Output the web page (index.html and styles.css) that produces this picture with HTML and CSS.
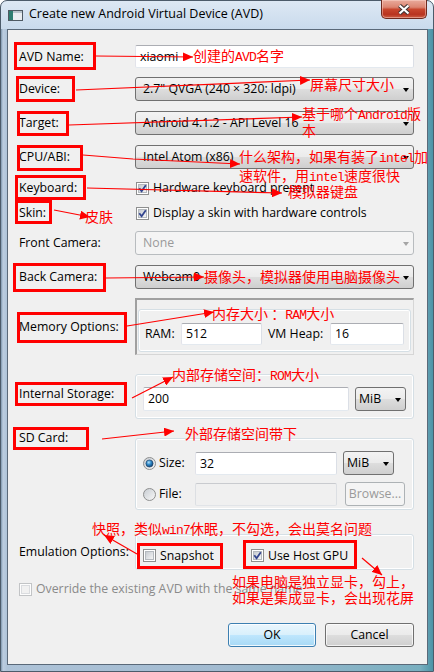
FILE: index.html
```html
<!DOCTYPE html>
<html lang="en">
<head>
<meta charset="utf-8">
<title>Create new Android Virtual Device (AVD)</title>
<link rel="stylesheet" href="styles.css">
</head>
<body>
<div class="window">
  <header class="titlebar">
    <svg class="app-icon" width="15" height="11" viewBox="0 0 15 11">
      <rect x="0.5" y="0.5" width="14" height="10" fill="#e9edf0" stroke="#4f5a63"/>
      <rect x="1" y="1" width="4" height="9" fill="#2f7d70"/>
      <rect x="5" y="1" width="9" height="2" fill="#b7c2ca"/>
    </svg>
    <span class="title">Create new Android Virtual Device (AVD)</span>
    <div class="close-btn">
      <svg width="14" height="11" viewBox="0 0 14 11">
        <path d="M2.5 1.5 L11.5 9.5 M11.5 1.5 L2.5 9.5" stroke="#3e3434" stroke-width="4.2" fill="none"/>
        <path d="M2.5 1.5 L11.5 9.5 M11.5 1.5 L2.5 9.5" stroke="#ffffff" stroke-width="2.2" fill="none"/>
      </svg>
    </div>
  </header>

  <main class="client">
    <div class="row">
      <span class="lbl">AVD Name:</span>
      <div class="input">xiaomi</div>
    </div>
    <div class="row mt-9">
      <span class="lbl">Device:</span>
      <div class="select"><span>2.7" QVGA (240 × 320: ldpi)</span></div>
    </div>
    <div class="row mt-10">
      <span class="lbl">Target:</span>
      <div class="select"><span>Android 4.1.2 - API Level 16</span></div>
    </div>
    <div class="row mt-10">
      <span class="lbl">CPU/ABI:</span>
      <div class="select"><span>Intel Atom (x86)</span></div>
    </div>
    <div class="row row-check mt-7">
      <span class="lbl">Keyboard:</span>
      <label class="check">
        <svg class="cb" width="13" height="13" viewBox="0 0 13 13">
          <defs><linearGradient id="g1" x1="0" y1="0" x2="1" y2="1"><stop offset="0" stop-color="#c3c8ce"/><stop offset="1" stop-color="#f8f8f8"/></linearGradient></defs>
          <rect x="0.5" y="0.5" width="12" height="12" fill="#fff" stroke="#8e8f8f"/>
          <rect x="2.5" y="2.5" width="8" height="8" fill="url(#g1)" stroke="#b4b9be"/>
          <path d="M3.3 6.3 L5.6 9.3 L9.8 3.2" fill="none" stroke="#33458f" stroke-width="1.8"/>
        </svg>
        <span>Hardware keyboard present</span>
      </label>
    </div>
    <div class="row row-check mt-1">
      <span class="lbl">Skin:</span>
      <label class="check">
        <svg class="cb" width="13" height="13" viewBox="0 0 13 13">
          <rect x="0.5" y="0.5" width="12" height="12" fill="#fff" stroke="#8e8f8f"/>
          <rect x="2.5" y="2.5" width="8" height="8" fill="url(#g1)" stroke="#b4b9be"/>
          <path d="M3.3 6.3 L5.6 9.3 L9.8 3.2" fill="none" stroke="#33458f" stroke-width="1.8"/>
        </svg>
        <span>Display a skin with hardware controls</span>
      </label>
    </div>
    <div class="row mt-6">
      <span class="lbl">Front Camera:</span>
      <div class="select is-disabled"><span>None</span></div>
    </div>
    <div class="row mt-10">
      <span class="lbl">Back Camera:</span>
      <div class="select"><span>Webcam0</span></div>
    </div>
    <div class="row mt-9">
      <span class="lbl">Memory Options:</span>
      <div class="mem-frame">
        <div class="group mem-group">
          <span class="mem-lbl">RAM:</span>
          <div class="input mem-ram">512</div>
          <span class="mem-lbl mem-lbl-vm">VM Heap:</span>
          <div class="input mem-vm">16</div>
        </div>
      </div>
    </div>
    <div class="row mt-19">
      <span class="lbl lbl-raise">Internal Storage:</span>
      <div class="group storage-group">
        <div class="input grow">200</div>
        <div class="select select-small"><span>MiB</span></div>
      </div>
    </div>
    <div class="row row-top mt-19">
      <span class="lbl lbl-sd">SD Card:</span>
      <div class="group sd-group">
        <div class="sd-line">
          <label class="radio-opt">
            <svg width="13" height="13" viewBox="0 0 13 13">
              <defs>
                <linearGradient id="rg" x1="0" y1="0" x2="1" y2="1"><stop offset="0" stop-color="#c6cbd1"/><stop offset="1" stop-color="#f9f9f9"/></linearGradient>
                <radialGradient id="rd" cx="0.4" cy="0.35" r="0.7"><stop offset="0" stop-color="#b6e2fb"/><stop offset="0.45" stop-color="#2e89c9"/><stop offset="1" stop-color="#0f3c6c"/></radialGradient>
              </defs>
              <circle cx="6.5" cy="6.5" r="6" fill="url(#rg)" stroke="#8e8f8f"/>
              <circle cx="6.5" cy="6.5" r="3.6" fill="url(#rd)" stroke="#1c3d5e" stroke-width="0.6"/>
            </svg>
            <span>Size:</span>
          </label>
          <div class="input sd-input">32</div>
          <div class="select select-small sd-unit"><span>MiB</span></div>
        </div>
        <div class="sd-line">
          <label class="radio-opt">
            <svg width="13" height="13" viewBox="0 0 13 13">
              <circle cx="6.5" cy="6.5" r="6" fill="url(#rg)" stroke="#8e8f8f"/>
            </svg>
            <span>File:</span>
          </label>
          <div class="input sd-input is-disabled"></div>
          <div class="button is-disabled browse">Browse...</div>
        </div>
      </div>
    </div>
    <div class="row mt-24">
      <span class="lbl">Emulation Options:</span>
      <div class="group emu-group">
        <label class="check emu-snap">
          <svg class="cb" width="13" height="13" viewBox="0 0 13 13">
            <rect x="0.5" y="0.5" width="12" height="12" fill="#fff" stroke="#8e8f8f"/>
            <rect x="2.5" y="2.5" width="8" height="8" fill="url(#g1)" stroke="#b4b9be"/>
          </svg>
          <span>Snapshot</span>
        </label>
        <label class="check">
          <svg class="cb" width="13" height="13" viewBox="0 0 13 13">
            <rect x="0.5" y="0.5" width="12" height="12" fill="#fff" stroke="#8e8f8f"/>
            <rect x="2.5" y="2.5" width="8" height="8" fill="url(#g1)" stroke="#b4b9be"/>
            <path d="M3.3 6.3 L5.6 9.3 L9.8 3.2" fill="none" stroke="#33458f" stroke-width="1.8"/>
          </svg>
          <span>Use Host GPU</span>
        </label>
      </div>
    </div>
    <label class="check override mt-10">
      <svg class="cb" width="13" height="13" viewBox="0 0 13 13">
        <rect x="0.5" y="0.5" width="12" height="12" fill="#fdfdfd" stroke="#c2c4c6"/>
        <rect x="2.5" y="2.5" width="8" height="8" fill="#f1f1f1" stroke="#dadcdf"/>
      </svg>
      <span>Override the existing AVD with the same name</span>
    </label>
    <div class="buttons">
      <div class="button button-default">OK</div>
      <div class="button">Cancel</div>
    </div>
  </main>
</div>

<svg class="marks" width="434" height="672" viewBox="0 0 434 672">
  <defs>
    <marker id="ah" markerUnits="userSpaceOnUse" markerWidth="11" markerHeight="9" refX="10" refY="4.5" orient="auto">
      <path d="M0 0 L10 4.5 L0 9 Z" fill="#ff0000"/>
    </marker>
  </defs>
  <g fill="none" stroke="#ff0000" stroke-width="3">
    <rect x="15.5" y="43.5" width="79" height="25"/>
    <rect x="17.5" y="77.5" width="56" height="23"/>
    <rect x="18.5" y="112.5" width="49" height="22"/>
    <rect x="18.5" y="146.5" width="63" height="23"/>
    <rect x="16.5" y="176.5" width="68" height="22"/>
    <rect x="16.5" y="201.5" width="34" height="21"/>
    <rect x="14.5" y="264.5" width="90" height="26"/>
    <rect x="18.5" y="313.5" width="107" height="28"/>
    <rect x="16.5" y="383.5" width="109" height="21"/>
    <rect x="14.5" y="428.5" width="73" height="20"/>
    <rect x="138.5" y="544.5" width="83" height="23"/>
    <rect x="244.5" y="541.5" width="111" height="26"/>
  </g>
  <g fill="none" stroke="#ff0000" stroke-width="1.2" marker-end="url(#ah)">
    <path d="M96 56 L193 57"/>
    <path d="M76 90 L310 80"/>
    <path d="M69 125 L302 117"/>
    <path d="M83 155 L133 159 L240 164"/>
    <path d="M87 188 L282 193"/>
    <path d="M54 210 L90 217"/>
    <path d="M106 278 L204 277"/>
    <path d="M127 326 L214 312"/>
    <path d="M132 398 L173 377"/>
    <path d="M102 439 L174 431"/>
    <path d="M137 554 L104 535"/>
    <path d="M362 558 L382 575"/>
  </g>
</svg>

<div class="notes">
  <p class="note n-name">创建的<span class="en">AVD</span>名字</p>
  <p class="note n-device">屏幕尺寸大小</p>
  <p class="note n-target">基于哪个<span class="en">Android</span>版<br>本</p>
  <p class="note n-cpu">什么架构，如果有装了<span class="en">intel</span>加<br>速软件，用<span class="en">intel</span>速度很快</p>
  <p class="note n-kbd">模拟器键盘</p>
  <p class="note n-skin">皮肤</p>
  <p class="note n-cam">摄像头，模拟器使用电脑摄像头</p>
  <p class="note n-mem">内存大小 ：<span class="en">RAM</span>大小</p>
  <p class="note n-rom">内部存储空间：<span class="en">ROM</span>大小</p>
  <p class="note n-sd">外部存储空间带下</p>
  <p class="note n-snap">快照，类似<span class="en">win7</span>休眠，不勾选，会出莫名问题</p>
  <p class="note n-gpu">如果电脑是独立显卡，勾上，<br>如果是集成显卡，会出现花屏</p>
</div>
</body>
</html>
```

FILE: styles.css
```css
* { box-sizing: border-box; }

html, body { margin: 0; padding: 0; }

body {
  width: 434px;
  height: 672px;
  overflow: hidden;
  position: relative;
  background: #ffffff;
  font-family: "Open Sans", "Noto Sans", sans-serif;
  font-size: 12.3px;
  line-height: 16px;
  color: #000;
}

/* ---------- window chrome ---------- */
.window {
  width: 434px;
  height: 672px;
  display: flex;
  flex-direction: column;
  padding: 0 5px 6px 6px;
  border: 1px solid #4c5b6a;
  border-radius: 7px 7px 0 0;
  background:
    linear-gradient(to bottom, #dde8f4 0, #c9daec 28px, rgba(0,0,0,0) 28px) no-repeat,
    linear-gradient(to right, #7d96ad 0, #bccde0 2px, #aec3d8 6px, #a2bbd1 50%, #79afc0 97%, #4d93a6 100%);
}

.titlebar {
  height: 28px;
  flex: none;
  display: flex;
  align-items: flex-start;
}

.app-icon {
  margin: 9px 0 0 1px;
  flex: none;
}

.title {
  margin: 5px 0 0 6px;
  font-size: 12.5px;
  color: #000;
  white-space: nowrap;
}

.close-btn {
  margin: -1px 1px 0 auto;
  width: 46px;
  height: 19px;
  display: flex;
  align-items: center;
  justify-content: center;
  border: 1px solid #6e2a1f;
  border-top: none;
  border-radius: 0 0 5px 5px;
  background: linear-gradient(to bottom, #e9ab9c 0%, #dc8571 40%, #c8462d 52%, #b83420 80%, #cd5f45 100%);
  box-shadow: inset 0 0 0 1px rgba(255, 220, 210, 0.45);
}

.client {
  flex: 1;
  display: flex;
  flex-direction: column;
  padding: 15px 13px 0 11px;
  border: 1px solid #5a6979;
  background: #f0f0f0;
}

/* ---------- form rows ---------- */
.row {
  display: grid;
  grid-template-columns: 116px 1fr;
  align-items: center;
}

.row-check { height: 24px; }
.row-top { align-items: start; }

.mt-1 { margin-top: 1px; }
.mt-6 { margin-top: 6px; }
.mt-7 { margin-top: 7px; }
.mt-9 { margin-top: 9px; }
.mt-10 { margin-top: 10px; }
.mt-19 { margin-top: 19px; }
.mt-24 { margin-top: 24px; }

.lbl { white-space: nowrap; }
.lbl-raise { margin-bottom: 6px; }
.lbl-sd { margin-top: -8px; }

/* ---------- controls ---------- */
.input {
  height: 23px;
  padding: 0 4px;
  line-height: 21px;
  background: #ffffff;
  border: 1px solid;
  border-color: #abadb3 #dbdfe6 #e3e9ef #e2e3ea;
  border-radius: 2px;
  white-space: nowrap;
  overflow: hidden;
}

.input.is-disabled {
  background: #f0f0f0;
  border-color: #c9cbcf #dcdfe3 #e1e4e8 #dcdfe3;
}

.select {
  height: 24px;
  display: flex;
  align-items: center;
  justify-content: space-between;
  padding: 0 4px 0 7px;
  border: 1px solid #707070;
  border-radius: 3px;
  background: linear-gradient(to bottom, #f3f3f3 0%, #ebebeb 48%, #dddddd 52%, #cfcfcf 100%);
  white-space: nowrap;
}

.select::after {
  content: "";
  flex: none;
  margin-top: 2px;
  border-left: 3.5px solid transparent;
  border-right: 3.5px solid transparent;
  border-top: 4px solid #000;
}

.select.is-disabled {
  border-color: #b8bcbf;
  background: #f4f4f4;
  color: #9a9a9a;
}

.select.is-disabled::after { border-top-color: #a5a5a5; }

.select-small {
  width: 51px;
  flex: none;
  padding-left: 3px;
}

.check {
  display: flex;
  align-items: center;
  gap: 4px;
  white-space: nowrap;
}

.cb { flex: none; margin-left: 1px; }

.button {
  width: 89px;
  height: 24px;
  display: flex;
  align-items: center;
  justify-content: center;
  border: 1px solid #707070;
  border-radius: 3px;
  background: linear-gradient(to bottom, #f2f2f2 0%, #ebebeb 48%, #dddddd 52%, #cfcfcf 100%);
  box-shadow: inset 0 0 0 1px rgba(255, 255, 255, 0.7);
}

.button-default {
  width: 88px;
  border-color: #3c7fb1;
  background: linear-gradient(to bottom, #eaf6fd 0%, #d9f0fc 48%, #bee6fd 52%, #a7d9f5 100%);
  box-shadow: inset 0 0 0 1px rgba(255, 255, 255, 0.8);
}

.button.is-disabled {
  border-color: #adb2b5;
  background: #f4f4f4;
  color: #9a9a9a;
  box-shadow: none;
}

/* ---------- group boxes ---------- */
.group {
  border: 1px solid #d5dfe5;
  border-radius: 3px;
  box-shadow: inset 0 0 0 1px #ffffff;
}

.mem-frame {
  height: 57px;
  padding: 9px 2px 2px 1px;
  border-style: solid;
  border-width: 2px 1px 1px 2px;
  border-color: #a0a0a0 #d6d6d6 #d6d6d6 #a0a0a0;
}

.mem-group {
  height: 43px;
  display: flex;
  align-items: flex-start;
  padding: 13px 6px 0 6px;
}

.mem-group .input { height: 22px; line-height: 20px; }

.mem-lbl {
  width: 36px;
  flex: none;
  line-height: 22px;
}

.mem-lbl-vm { width: 62px; margin-left: 6px; }
.mem-ram { width: 81px; flex: none; }
.mem-vm { flex: 1; }

.storage-group {
  height: 45px;
  display: flex;
  gap: 6px;
  padding: 12px 7px 0 7px;
}

.grow { flex: 1; height: 24px; line-height: 22px; }

.sd-group {
  height: 72px;
  display: flex;
  flex-direction: column;
  gap: 7px;
  padding: 12px 0 0 7px;
}

.sd-line {
  height: 24px;
  display: flex;
  align-items: center;
}

.radio-opt {
  width: 52px;
  flex: none;
  display: flex;
  align-items: center;
  gap: 3px;
}

.sd-input { width: 142px; flex: none; }
.sd-unit { margin-left: 6px; }
.browse { width: 60px; margin-left: 8px; }

.emu-group {
  height: 36px;
  display: flex;
  align-items: center;
  padding: 7px 0 0 7px;
}

.emu-snap { width: 108px; flex: none; }
.emu-snap .cb, .emu-group .cb { margin-left: 0; }

.override {
  height: 18px;
  color: #8a8a8a;
}

.override .cb { margin-left: 0; }

.buttons {
  margin-top: 25px;
  display: flex;
  justify-content: flex-end;
  gap: 9px;
  padding-right: 0;
}

/* ---------- annotation overlay ---------- */
.marks {
  position: absolute;
  left: 0;
  top: 0;
  pointer-events: none;
}

.notes {
  position: absolute;
  left: 0;
  top: 0;
  width: 434px;
  height: 672px;
  pointer-events: none;
}

.note {
  position: absolute;
  margin: 0;
  font-family: "Noto Sans CJK SC", sans-serif;
  font-size: 14px;
  line-height: 16px;
  color: #ff0000;
  white-space: nowrap;
}

.note .en {
  font-family: "Liberation Mono", monospace;
  font-size: 13px;
  letter-spacing: -0.8px;
}

.n-name { left: 193px; top: 47px; }
.n-device { left: 310px; top: 76px; }
.n-target { left: 302px; top: 106px; line-height: 15px; }
.n-cpu { left: 239px; top: 148px; }
.n-kbd { left: 288px; top: 183px; }
.n-skin { left: 85px; top: 208px; }
.n-cam { left: 204px; top: 268px; }
.n-mem { left: 212px; top: 305px; }
.n-rom { left: 172px; top: 366px; }
.n-sd { left: 185px; top: 425px; }
.n-snap { left: 92px; top: 520px; }
.n-gpu { left: 232px; top: 573px; line-height: 16px; }
```
